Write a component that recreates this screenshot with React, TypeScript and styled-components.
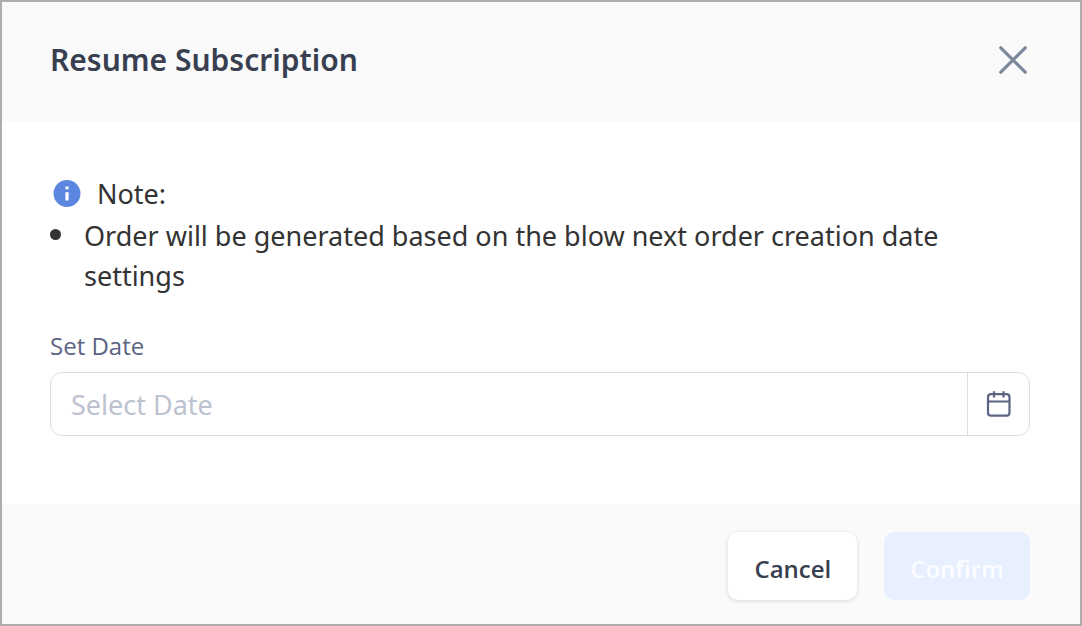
import React, { useState } from "react";
import styled, { createGlobalStyle } from "styled-components";

const GlobalStyle = createGlobalStyle`
  * { box-sizing: border-box; }
  body { margin: 0; background: #ffffff; font-family: "Noto Sans", "Open Sans", sans-serif; }
  button, input { font: inherit; }
`;

const controlFont = `"Open Sans", "Noto Sans", sans-serif`;

const Dialog = styled.section`
  display: flex;
  flex-direction: column;
  min-height: 100vh;
  border: 2px solid #adadad;
  background: #ffffff;
`;

const Header = styled.header`
  display: flex;
  align-items: center;
  justify-content: space-between;
  padding: 36px 51px 40px 48px;
  background: #fafafa;
`;

const Title = styled.h1`
  margin: 0;
  font-size: 30px;
  font-weight: 600;
  line-height: 44px;
  color: #383f50;
`;

const CloseButton = styled.button`
  display: flex;
  padding: 0;
  border: 0;
  background: none;
  color: #7b879b;
  cursor: pointer;
`;

const Body = styled.div`
  flex: 1;
  padding: 52px 50px 68px 48px;
`;

const NoteHeading = styled.p`
  display: flex;
  align-items: center;
  gap: 16px;
  margin: 0;
  padding-left: 3px;
  font-size: 27px;
  line-height: 40px;
  color: #333333;
`;

const NoteList = styled.ul`
  margin: 2px 0 32px;
  padding: 0;
  list-style: none;
  font-size: 27px;
  line-height: 40px;
  color: #333333;
`;

const NoteItem = styled.li`
  display: grid;
  grid-template-columns: 34px 1fr;

  &::before {
    content: "";
    width: 11px;
    height: 11px;
    margin-top: 13px;
    border-radius: 50%;
    background: currentColor;
  }
`;

const Label = styled.label`
  display: block;
  margin-bottom: 8px;
  font-family: ${controlFont};
  font-size: 24px;
  line-height: 36px;
  color: #5b6482;
`;

const DateField = styled.div`
  display: flex;
  height: 64px;
  border: 1px solid #d8dfe7;
  border-radius: 12px;
  overflow: hidden;
`;

const DateInput = styled.input`
  flex: 1;
  min-width: 0;
  padding: 0 20px;
  border: 0;
  outline: 0;
  background: none;
  font-size: 27px;
  color: #383f50;

  &::placeholder {
    color: #bcc2cf;
    opacity: 1;
  }
`;

const CalendarButton = styled.button`
  display: flex;
  align-items: center;
  justify-content: center;
  width: 62px;
  padding: 0;
  border: 0;
  border-left: 1px solid #d8dfe7;
  background: none;
  color: #5b6482;
  cursor: pointer;
`;

const Footer = styled.footer`
  display: flex;
  justify-content: flex-end;
  gap: 27px;
  padding: 28px 50px 24px;
  background: #fafafa;
`;

const Button = styled.button<{ $primary?: boolean }>`
  height: 68px;
  padding: 5px 26px 0;
  border: 0;
  border-radius: 10px;
  font-family: ${controlFont};
  font-size: 24px;
  font-weight: 600;
  line-height: 36px;
  color: ${(p) => (p.$primary ? "#fcfdff" : "#383f50")};
  background: ${(p) => (p.$primary ? "#e8efff" : "#ffffff")};
  box-shadow: ${(p) => (p.$primary ? "none" : "0 1px 4px rgba(0, 0, 0, 0.14)")};
`;

const CloseIcon = () => (
  <svg width="32" height="32" viewBox="0 0 32 32" fill="none" stroke="currentColor" strokeWidth="3.2" strokeLinecap="round" aria-hidden="true">
    <path d="M3.8 3.8 28.2 28.2M28.2 3.8 3.8 28.2" />
  </svg>
);

const InfoIcon = () => (
  <svg width="28" height="28" viewBox="0 0 28 28" aria-hidden="true">
    <circle cx="14" cy="13.5" r="13.5" fill="#5b87e0" />
    <path d="M12.4 6.5h3.2v2.8h-3.2zM12.4 12.3h3.2v8.2h-3.2z" fill="#ffffff" />
  </svg>
);

const CalendarIcon = () => (
  <svg width="26" height="28" viewBox="0 0 26 28" fill="none" stroke="currentColor" strokeWidth="2.2" aria-hidden="true">
    <rect x="2" y="4.2" width="21.5" height="21.5" rx="3" />
    <path d="M2 11.5h21.5" strokeWidth="1.8" />
    <path d="M8 1.2v6.3M17.5 1.2v6.3" />
  </svg>
);

export default function App() {
  const [date, setDate] = useState("");
  return (
    <>
      <GlobalStyle />
      <Dialog role="dialog" aria-labelledby="dialog-title">
        <Header>
          <Title id="dialog-title">Resume Subscription</Title>
          <CloseButton type="button" aria-label="Close">
            <CloseIcon />
          </CloseButton>
        </Header>
        <Body>
          <NoteHeading>
            <InfoIcon />
            Note:
          </NoteHeading>
          <NoteList>
            <NoteItem>Order will be generated based on the blow next order creation date settings</NoteItem>
          </NoteList>
          <Label htmlFor="next-date">Set Date</Label>
          <DateField>
            <DateInput
              id="next-date"
              type="text"
              placeholder="Select Date"
              value={date}
              onChange={(e) => setDate(e.target.value)}
            />
            <CalendarButton type="button" aria-label="Open calendar">
              <CalendarIcon />
            </CalendarButton>
          </DateField>
        </Body>
        <Footer>
          <Button type="button">Cancel</Button>
          <Button type="button" $primary disabled={!date}>
            Confirm
          </Button>
        </Footer>
      </Dialog>
    </>
  );
}
